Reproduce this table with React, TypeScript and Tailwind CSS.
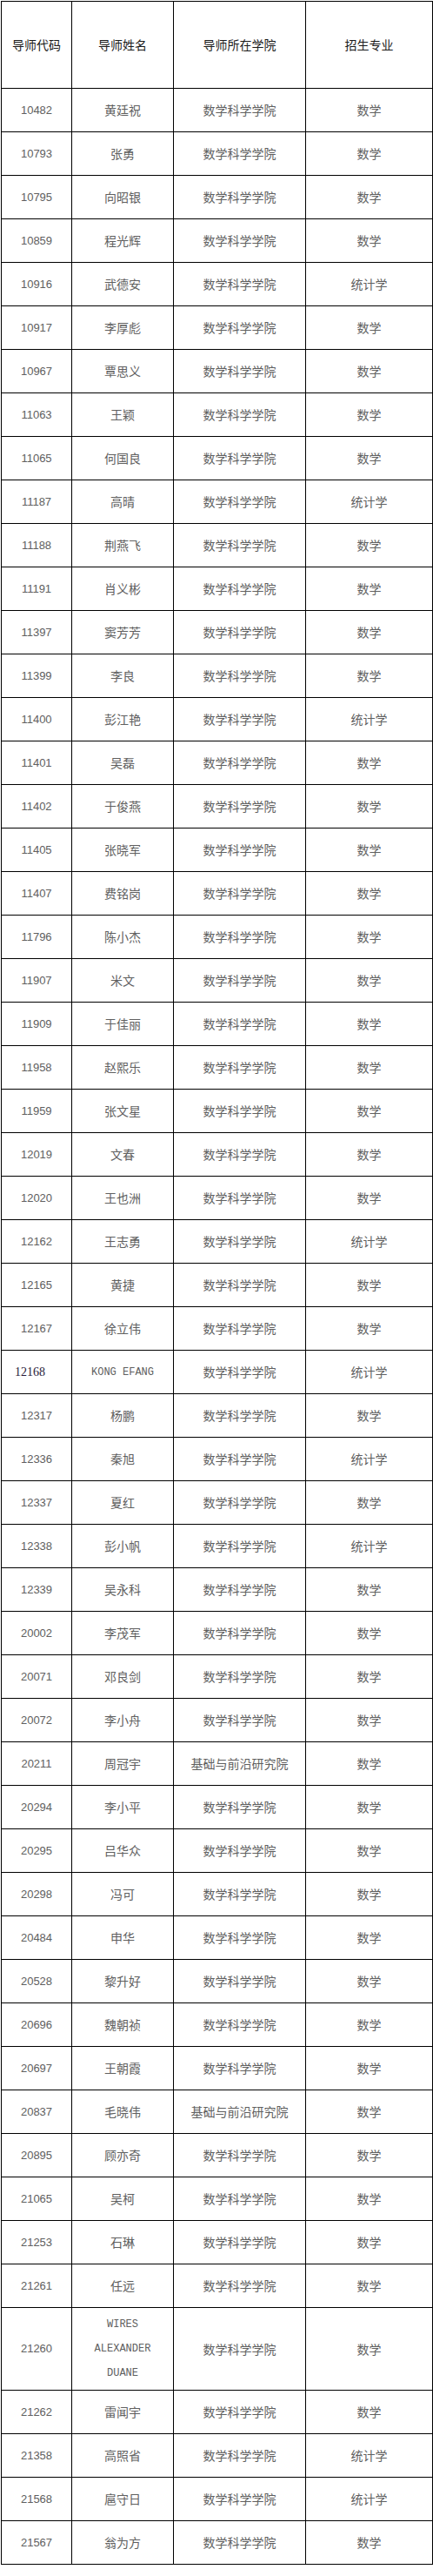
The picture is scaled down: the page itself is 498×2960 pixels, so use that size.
import React from 'react';

type Row = { code: string; name: string; college?: string; major: string };

const MATH = '数学科学学院';
const FRONT = '基础与前沿研究院';

const rows: Row[] = [
  { code: '10482', name: '黄廷祝', major: '数学' },
  { code: '10793', name: '张勇', major: '数学' },
  { code: '10795', name: '向昭银', major: '数学' },
  { code: '10859', name: '程光辉', major: '数学' },
  { code: '10916', name: '武德安', major: '统计学' },
  { code: '10917', name: '李厚彪', major: '数学' },
  { code: '10967', name: '覃思义', major: '数学' },
  { code: '11063', name: '王颖', major: '数学' },
  { code: '11065', name: '何国良', major: '数学' },
  { code: '11187', name: '高晴', major: '统计学' },
  { code: '11188', name: '荆燕飞', major: '数学' },
  { code: '11191', name: '肖义彬', major: '数学' },
  { code: '11397', name: '窦芳芳', major: '数学' },
  { code: '11399', name: '李良', major: '数学' },
  { code: '11400', name: '彭江艳', major: '统计学' },
  { code: '11401', name: '吴磊', major: '数学' },
  { code: '11402', name: '于俊燕', major: '数学' },
  { code: '11405', name: '张晓军', major: '数学' },
  { code: '11407', name: '费铭岗', major: '数学' },
  { code: '11796', name: '陈小杰', major: '数学' },
  { code: '11907', name: '米文', major: '数学' },
  { code: '11909', name: '于佳丽', major: '数学' },
  { code: '11958', name: '赵熙乐', major: '数学' },
  { code: '11959', name: '张文星', major: '数学' },
  { code: '12019', name: '文春', major: '数学' },
  { code: '12020', name: '王也洲', major: '数学' },
  { code: '12162', name: '王志勇', major: '统计学' },
  { code: '12165', name: '黄捷', major: '数学' },
  { code: '12167', name: '徐立伟', major: '数学' },
  { code: '12168', name: 'KONG EFANG', major: '统计学' },
  { code: '12317', name: '杨鹏', major: '数学' },
  { code: '12336', name: '秦旭', major: '统计学' },
  { code: '12337', name: '夏红', major: '数学' },
  { code: '12338', name: '彭小帆', major: '统计学' },
  { code: '12339', name: '吴永科', major: '数学' },
  { code: '20002', name: '李茂军', major: '数学' },
  { code: '20071', name: '邓良剑', major: '数学' },
  { code: '20072', name: '李小舟', major: '数学' },
  { code: '20211', name: '周冠宇', college: FRONT, major: '数学' },
  { code: '20294', name: '李小平', major: '数学' },
  { code: '20295', name: '吕华众', major: '数学' },
  { code: '20298', name: '冯可', major: '数学' },
  { code: '20484', name: '申华', major: '数学' },
  { code: '20528', name: '黎升好', major: '数学' },
  { code: '20696', name: '魏朝祯', major: '数学' },
  { code: '20697', name: '王朝霞', major: '数学' },
  { code: '20837', name: '毛晓伟', college: FRONT, major: '数学' },
  { code: '20895', name: '顾亦奇', major: '数学' },
  { code: '21065', name: '吴柯', major: '数学' },
  { code: '21253', name: '石琳', major: '数学' },
  { code: '21261', name: '任远', major: '数学' },
  { code: '21260', name: 'WIRES|ALEXANDER|DUANE', major: '数学' },
  { code: '21262', name: '雷闻宇', major: '数学' },
  { code: '21358', name: '高照省', major: '统计学' },
  { code: '21568', name: '扈守日', major: '统计学' },
  { code: '21567', name: '翁为方', major: '数学' },
];

const cjk = "font-['Noto_Sans_CJK_SC',sans-serif] text-[14px]";
const mono = "font-['Liberation_Mono','Noto_Sans_CJK_SC',monospace] text-[12px]";
const digits = "font-['Liberation_Sans',sans-serif] text-[13px]";
const cell = 'border border-black text-center align-middle p-0';

const isLatin = (s: string) => /^[A-Z |]+$/.test(s);

export default function App() {
  return (
    <div className="bg-white pl-px pt-px pb-[13px]">
      <table className="w-[496px] table-fixed border-collapse text-[#606060]">
        <colgroup>
          <col className="w-[81px]" />
          <col className="w-[117px]" />
          <col className="w-[152px]" />
          <col className="w-[146px]" />
        </colgroup>
        <thead>
          <tr className="h-[100px] text-[#1a1a1a]">
            {['导师代码', '导师姓名', '导师所在学院', '招生专业'].map((h) => (
              <th key={h} className={`${cell} ${cjk} font-normal`}>
                {h}
              </th>
            ))}
          </tr>
        </thead>
        <tbody>
          {rows.map((r) => {
            const multi = r.name.includes('|');
            return (
              <tr key={r.code} className={multi ? 'h-[95px]' : 'h-[50px]'}>
                {r.code === '12168' ? (
                  <td className={`${cell} text-left pl-[15px] font-['Liberation_Serif',serif] text-[14px] text-[#2a1a3a]`}>
                    {r.code}
                  </td>
                ) : (
                  <td className={`${cell} ${digits}`}>{r.code}</td>
                )}
                <td className={`${cell} ${isLatin(r.name) ? mono : cjk} ${multi ? 'leading-[28px]' : ''}`}>
                  {multi
                    ? r.name.split('|').map((l) => <div key={l}>{l}</div>)
                    : r.name}
                </td>
                <td className={`${cell} ${cjk}`}>{r.college ?? MATH}</td>
                <td className={`${cell} ${cjk}`}>{r.major}</td>
              </tr>
            );
          })}
        </tbody>
      </table>
    </div>
  );
}
